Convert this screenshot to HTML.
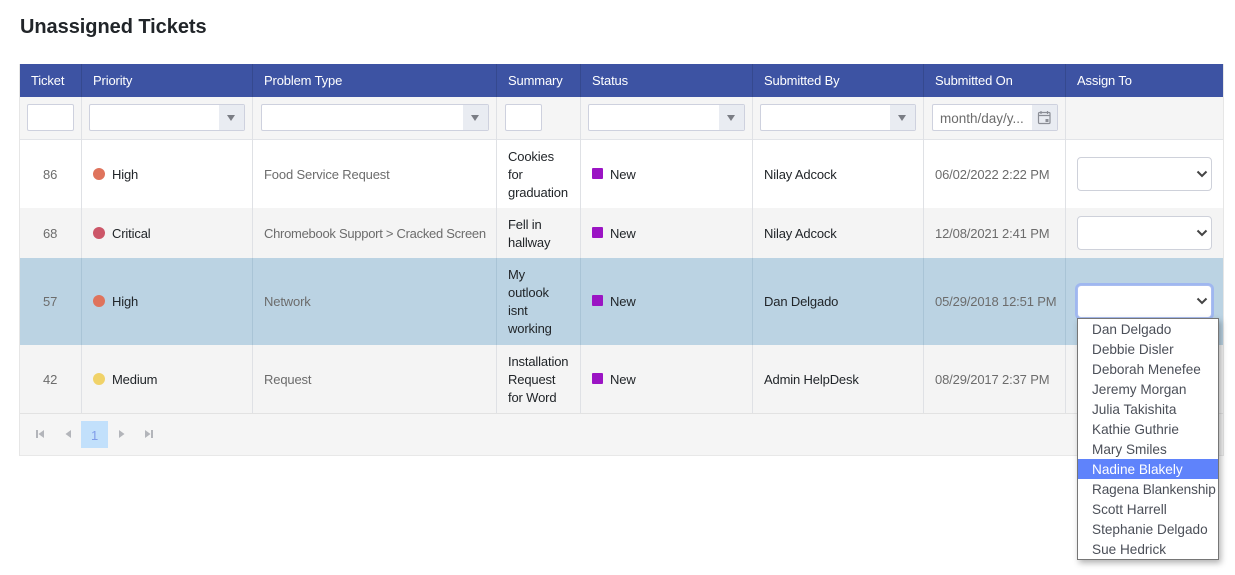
<!DOCTYPE html>
<html><head><meta charset="utf-8">
<style>
html,body{margin:0;padding:0;background:#fff}
body{width:1235px;height:575px;position:relative;overflow:hidden;font-family:"Liberation Sans",sans-serif;font-size:13px;letter-spacing:-.15px;color:#212529}
.a{position:absolute;box-sizing:border-box}
.t{position:absolute;white-space:nowrap;line-height:18px;height:18px;margin-top:1px}
.g{color:#6c6c6c}
.h{color:#fff;top:72px;margin-top:0}
.v{position:absolute;width:1px}
.b{position:absolute;width:1px;top:258px;height:87px;background:#a9c4d6}
.inp{position:absolute;box-sizing:border-box;background:#fff;border:1px solid #ced1de;border-radius:2px;top:104px;height:27px}
.btn{position:absolute;top:0;right:0;bottom:0;width:25px;background:#e9ecf2}
.btn:after{content:"";position:absolute;left:8px;top:10px;border-left:4px solid transparent;border-right:4px solid transparent;border-top:6px solid #7a7d85}
.sel{position:absolute;box-sizing:border-box;left:1077px;width:135px;background:#fff;border:1px solid #ced1da;border-radius:4px}
.dot{position:absolute;width:12px;height:12px;border-radius:50%;left:93px}
.sq{position:absolute;width:11px;height:11px;left:592px;background:#9b14c4;border-radius:1px}
.it{position:absolute;left:1px;width:140px;height:20px;line-height:20px;margin-top:1px;padding-left:14px;box-sizing:border-box;color:#4b4f58;white-space:nowrap;font-size:13.6px;letter-spacing:0}
</style></head><body>
<div class="t" style="left:20px;top:13px;height:26px;line-height:26px;font-size:20px;font-weight:bold;color:#212529;letter-spacing:-.05px">Unassigned Tickets</div>

<div class="a" style="left:20px;top:64px;width:1203px;height:33px;background:#3d53a3"></div>
<div class="a" style="left:20px;top:97px;width:1203px;height:43px;background:#f5f5f5;border-bottom:1px solid #e2e4e8"></div>
<div class="a" style="left:20px;top:208px;width:1203px;height:50px;background:#f4f4f4"></div>
<div class="a" style="left:20px;top:258px;width:1203px;height:87px;background:#bbd3e3"></div>
<div class="a" style="left:20px;top:345px;width:1203px;height:68px;background:#f4f4f4"></div>
<div class="a" style="left:20px;top:413px;width:1203px;height:43px;background:#f5f5f5;border-top:1px solid #e2e2e2;border-bottom:1px solid #e8e8e8"></div>
<div class="a" style="left:19px;top:64px;width:1px;height:392px;background:#e6e6e6"></div>
<div class="a" style="left:1223px;top:64px;width:1px;height:392px;background:#e6e6e6"></div>

<div class="v" style="left:81px;top:64px;height:33px;background:#35498f"></div><div class="v" style="left:81px;top:97px;height:316px;background:#dfe1e5"></div>
<div class="v" style="left:252px;top:64px;height:33px;background:#35498f"></div><div class="v" style="left:252px;top:97px;height:316px;background:#dfe1e5"></div>
<div class="v" style="left:496px;top:64px;height:33px;background:#35498f"></div><div class="v" style="left:496px;top:97px;height:316px;background:#dfe1e5"></div>
<div class="v" style="left:580px;top:64px;height:33px;background:#35498f"></div><div class="v" style="left:580px;top:97px;height:316px;background:#dfe1e5"></div>
<div class="v" style="left:752px;top:64px;height:33px;background:#35498f"></div><div class="v" style="left:752px;top:97px;height:316px;background:#dfe1e5"></div>
<div class="v" style="left:923px;top:64px;height:33px;background:#35498f"></div><div class="v" style="left:923px;top:97px;height:316px;background:#dfe1e5"></div>
<div class="v" style="left:1065px;top:64px;height:33px;background:#35498f"></div><div class="v" style="left:1065px;top:97px;height:316px;background:#dfe1e5"></div>
<div class="b" style="left:81px"></div><div class="b" style="left:252px"></div><div class="b" style="left:496px"></div><div class="b" style="left:580px"></div><div class="b" style="left:752px"></div><div class="b" style="left:923px"></div><div class="b" style="left:1065px"></div>

<div class="t h" style="left:31px">Ticket</div>
<div class="t h" style="left:93px">Priority</div>
<div class="t h" style="left:264px">Problem Type</div>
<div class="t h" style="left:508px">Summary</div>
<div class="t h" style="left:592px">Status</div>
<div class="t h" style="left:764px">Submitted By</div>
<div class="t h" style="left:935px">Submitted On</div>
<div class="t h" style="left:1077px">Assign To</div>

<div class="inp" style="left:27px;width:47px"></div>
<div class="inp" style="left:89px;width:156px"><div class="btn"></div></div>
<div class="inp" style="left:261px;width:228px"><div class="btn"></div></div>
<div class="inp" style="left:505px;width:37px"></div>
<div class="inp" style="left:588px;width:157px"><div class="btn"></div></div>
<div class="inp" style="left:760px;width:156px"><div class="btn"></div></div>
<div class="inp" style="left:932px;width:126px"><div class="btn"></div></div>
<div class="a" style="left:1032px;top:105px;width:25px;height:25px;background:#e9ecf2"></div>
<div class="t g" style="left:940px;top:109px;font-size:13.5px;letter-spacing:0">month/day/y...</div>
<svg class="a" style="left:1037px;top:110px" width="15" height="15" viewBox="0 0 15 15" fill="none" stroke="#8b8e96" stroke-width="1.2"><rect x="1.5" y="2.5" width="11.5" height="11" rx="1"/><path d="M1.5 5.5h11.5M4 1v3M10.500 1v3"/><rect x="8.500" y="9" width="3" height="3" fill="#8b8e96" stroke="none"/></svg>

<!-- rows -->
<div class="t g" style="left:43px;top:165px">86</div>
<div class="dot" style="top:168px;background:#df735c"></div>
<div class="t" style="left:112px;top:165px">High</div>
<div class="t g" style="left:264px;top:165px">Food Service Request</div>
<div class="t" style="left:508px;top:147px">Cookies</div>
<div class="t" style="left:508px;top:165px">for</div>
<div class="t" style="left:508px;top:183px">graduation</div>
<div class="sq" style="top:168px"></div>
<div class="t" style="left:610px;top:165px">New</div>
<div class="t" style="left:764px;top:165px">Nilay Adcock</div>
<div class="t g" style="left:935px;top:165px">06/02/2022 2:22 PM</div>
<div class="sel" style="top:157px;height:34px"></div>

<div class="t g" style="left:43px;top:224px">68</div>
<div class="dot" style="top:227px;background:#cc5668"></div>
<div class="t" style="left:112px;top:224px">Critical</div>
<div class="t g" style="left:264px;top:224px;letter-spacing:-.28px">Chromebook Support &gt; Cracked Screen</div>
<div class="t" style="left:508px;top:215px">Fell in</div>
<div class="t" style="left:508px;top:233px">hallway</div>
<div class="sq" style="top:227px"></div>
<div class="t" style="left:610px;top:224px">New</div>
<div class="t" style="left:764px;top:224px">Nilay Adcock</div>
<div class="t g" style="left:935px;top:224px">12/08/2021 2:41 PM</div>
<div class="sel" style="top:216px;height:34px"></div>

<div class="t g" style="left:43px;top:292px">57</div>
<div class="dot" style="top:295px;background:#df735c"></div>
<div class="t" style="left:112px;top:292px">High</div>
<div class="t g" style="left:264px;top:292px">Network</div>
<div class="t" style="left:508px;top:265px">My</div>
<div class="t" style="left:508px;top:283px">outlook</div>
<div class="t" style="left:508px;top:301px">isnt</div>
<div class="t" style="left:508px;top:319px">working</div>
<div class="sq" style="top:295px"></div>
<div class="t" style="left:610px;top:292px">New</div>
<div class="t" style="left:764px;top:292px">Dan Delgado</div>
<div class="t g" style="left:935px;top:292px">05/29/2018 12:51 PM</div>
<div class="sel" style="top:285px;height:33px;border:1px solid #a9bdf0;box-shadow:0 0 0 2px #9fb7f0"></div>

<div class="t g" style="left:43px;top:370px">42</div>
<div class="dot" style="top:373px;background:#f0d268"></div>
<div class="t" style="left:112px;top:370px">Medium</div>
<div class="t g" style="left:264px;top:370px">Request</div>
<div class="t" style="left:508px;top:352px">Installation</div>
<div class="t" style="left:508px;top:370px">Request</div>
<div class="t" style="left:508px;top:388px">for Word</div>
<div class="sq" style="top:373px"></div>
<div class="t" style="left:610px;top:370px">New</div>
<div class="t" style="left:764px;top:370px">Admin HelpDesk</div>
<div class="t g" style="left:935px;top:370px">08/29/2017 2:37 PM</div>

<svg class="a" style="left:1196px;top:170px" width="12" height="8"><path d="M1.500 1.500L6 6l4.500-4.500" fill="none" stroke="#444" stroke-width="2"/></svg>
<svg class="a" style="left:1196px;top:229px" width="12" height="8"><path d="M1.500 1.500L6 6l4.500-4.500" fill="none" stroke="#444" stroke-width="2"/></svg>
<svg class="a" style="left:1196px;top:297px" width="12" height="8"><path d="M1.500 1.500L6 6l4.500-4.500" fill="none" stroke="#444" stroke-width="2"/></svg>

<!-- pager -->
<div class="a" style="left:81px;top:421px;width:27px;height:27px;background:#c2e0fb;color:#7f9ce8;text-align:center;line-height:29px">1</div>
<svg class="a" style="left:35px;top:429px" width="10" height="10" fill="#b3b5ba"><path d="M1 1h2v8H1zM9 1v8L3.500 5z"/></svg>
<svg class="a" style="left:63px;top:429px" width="10" height="10" fill="#b3b5ba"><path d="M8 1v8L2.500 5z"/></svg>
<svg class="a" style="left:117px;top:429px" width="10" height="10" fill="#b3b5ba"><path d="M2 1v8l5.500-4z"/></svg>
<svg class="a" style="left:144px;top:429px" width="10" height="10" fill="#b3b5ba"><path d="M1 1v8l5.500-4zM7 1h2v8H7z"/></svg>

<!-- dropdown -->
<div class="a" style="left:1077px;top:318px;width:142px;height:242px;background:#fff;border:1px solid #767676;box-shadow:2px 3px 6px rgba(0,0,0,.3)"></div>
<div class="a" style="left:1078px;top:459px;width:140px;height:20px;background:#5f83fb"></div>
<div class="a" style="left:1077px;top:318px;width:142px;height:242px">
<div class="it" style="top:1px">Dan Delgado</div>
<div class="it" style="top:21px">Debbie Disler</div>
<div class="it" style="top:41px">Deborah Menefee</div>
<div class="it" style="top:61px">Jeremy Morgan</div>
<div class="it" style="top:81px">Julia Takishita</div>
<div class="it" style="top:101px">Kathie Guthrie</div>
<div class="it" style="top:121px">Mary Smiles</div>
<div class="it" style="top:141px;color:#fff">Nadine Blakely</div>
<div class="it" style="top:161px;letter-spacing:-.1px">Ragena Blankenship</div>
<div class="it" style="top:181px">Scott Harrell</div>
<div class="it" style="top:201px">Stephanie Delgado</div>
<div class="it" style="top:221px">Sue Hedrick</div>
</div>
</body></html>
